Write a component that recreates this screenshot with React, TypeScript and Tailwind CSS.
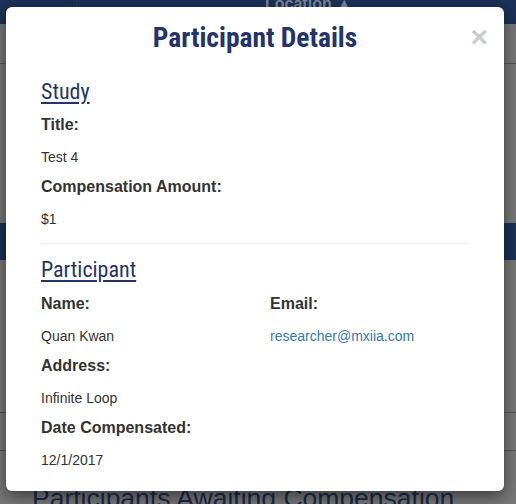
import React from "react";

const cond = { fontFamily: '"Roboto Condensed", Roboto, "Liberation Sans", sans-serif' };
const sans = { fontFamily: '"Liberation Sans", Arial, sans-serif' };

function Field({ label, value, link }: { label: string; value: string; link?: boolean }) {
  return (
    <div>
      <div className="text-[16px] leading-[22px] font-bold text-[#333] mb-[11px]" style={sans}>
        {label}
      </div>
      <div
        className={`text-[14px] leading-[20px] mb-[9px] ${link ? "text-[#337ab7]" : "text-[#333]"}`}
        style={sans}
      >
        {value}
      </div>
    </div>
  );
}

export default function App() {
  return (
    <div className="relative w-[516px] h-[504px] overflow-hidden bg-[#777777]">
      {/* dimmed page behind */}
      <div className="flex flex-col">
        <div className="h-[24px] bg-[#1b3157] flex">
          <div className="w-[77px] border-r border-[#2a3c5c]" />
          <div className="flex-1 flex justify-center">
            <span className="text-[16px] leading-[20px] font-bold text-[#7d8699] ml-[24px] -mt-[6px]" style={sans}>
              Location ▲
            </span>
          </div>
        </div>
        <div className="h-[40px] border-b border-[#555]" />
        <div className="h-[159px]" />
        <div className="h-[37px] bg-[#1b3157]" />
        <div className="h-[153px] border-b border-[#555]" />
        <div className="h-[38px] border-b border-[#555]" />
        <div className="pl-[32px] pt-[31px]">
          <span className="text-[26.5px] leading-[32px] text-[#1b2a48]" style={sans}>
            Participants Awaiting Compensation
          </span>
        </div>
      </div>

      {/* modal */}
      <div className="absolute left-[6px] top-[7px] w-[498px] bg-white rounded-[6px] shadow-[0_5px_15px_rgba(0,0,0,0.5)] px-[35px] pb-[12px]">
        <div
          className="absolute right-[16px] top-[13px] text-[30px] leading-[34px] font-bold text-[#cccccc]"
          style={sans}
        >
          ×
        </div>
        <div className="pt-[13px] text-center">
          <span className="text-[27.5px] leading-[36px] font-bold text-[#22346b]" style={cond}>
            Participant Details
          </span>
        </div>
        <div className="mt-[23px]">
          <span className="text-[22px] leading-[26px] text-[#22346b] underline decoration-[2px] underline-offset-[3px]" style={cond}>
            Study
          </span>
        </div>
        <div className="mt-[9px]">
          <Field label="Title:" value="Test 4" />
          <Field label="Compensation Amount:" value="$1" />
        </div>
        <div className="mt-[14px] border-t border-[#eeeeee]" />
        <div className="mt-[13px]">
          <span className="text-[22px] leading-[26px] text-[#22346b] underline decoration-[2px] underline-offset-[3px]" style={cond}>
            Participant
          </span>
        </div>
        <div className="mt-[10px] grid grid-cols-2 gap-x-[30px]">
          <div>
            <Field label="Name:" value="Quan Kwan" />
            <Field label="Address:" value="Infinite Loop" />
            <Field label="Date Compensated:" value="12/1/2017" />
          </div>
          <div>
            <Field label="Email:" value="researcher@mxiia.com" link />
          </div>
        </div>
      </div>
    </div>
  );
}
